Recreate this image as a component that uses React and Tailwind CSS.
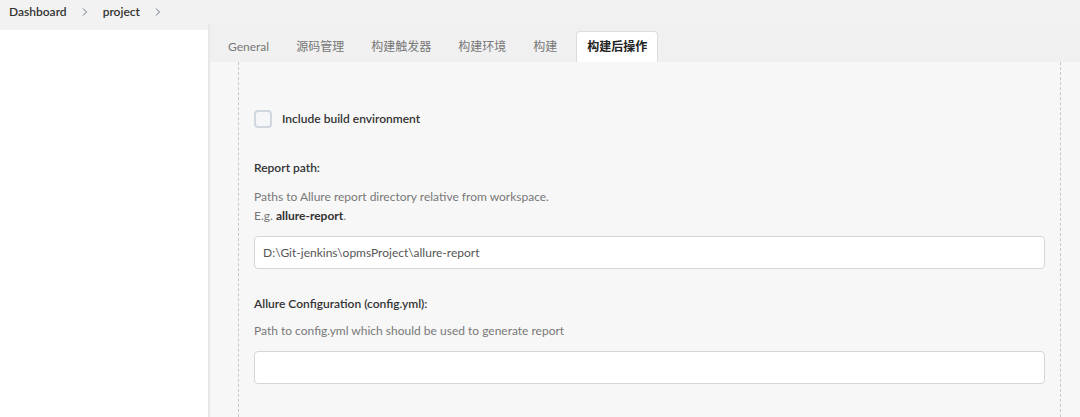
const font = { fontFamily: 'Lato, "Noto Sans CJK SC", sans-serif' };

function Chevron() {
  return (
    <svg width="8" height="10" viewBox="0 0 8 10" className="text-gray-500">
      <path d="M2 1.5 L5.5 5 L2 8.5" fill="none" stroke="currentColor" strokeWidth="1" />
    </svg>
  );
}

const tabs = ["General", "源码管理", "构建触发器", "构建环境", "构建"];

export default function App() {
  return (
    <div className="w-[1080px] h-[417px] overflow-hidden bg-[#f2f2f2] text-[#333]" style={font}>
      <div className="h-[24px] flex items-center gap-[14px] pl-[9px] text-[12px] font-semibold text-[#333]">
        <span>Dashboard</span>
        <Chevron />
        <span>project</span>
        <Chevron />
      </div>
      <div className="flex h-[393px]">
        <div className="w-[208px] bg-white shrink-0 mt-[6px]" />
        <div className="w-[2px] bg-[#e8e8e8] shrink-0" />
        <div className="flex-1 flex flex-col">
          <div className="h-[38px] flex items-end pl-[18px] bg-[#f0f0f0]">
            {tabs.map((t) => (
              <div key={t} className="h-[30px] flex items-center mr-[27px] text-[12px] text-[#777]">
                {t}
              </div>
            ))}
            <div className="h-[31px] -ml-[8px] px-[10px] flex items-center bg-white border border-b-0 border-[#dcdcdc] rounded-t-[4px] text-[12px] font-bold text-[#222]">
              构建后操作
            </div>
          </div>
          <div className="flex-1 bg-[#f7f7f7] pl-[28px] pr-[19px]">
            <div className="h-full border-l border-r border-dashed border-[#c8c8c8] pl-[15px] pr-[15px]">
              <div className="pt-[48px] flex items-center gap-[10px]">
                <div className="w-[18px] h-[18px] rounded-[4px] border-2 border-[#cfd6de] bg-[#f4f6f8]" />
                <span className="text-[12px] font-semibold text-[#333]">Include build environment</span>
              </div>
              <div className="mt-[31px] text-[12px] font-semibold text-[#333]">Report path:</div>
              <div className="mt-[10px] text-[12px] text-[#777] leading-[19px]">
                Paths to Allure report directory relative from workspace.
                <br />
                E.g. <b className="text-[#333]">allure-report</b>.
              </div>
              <div className="mt-[11px] h-[33px] bg-white border border-[#d6d6d6] rounded-[4px] flex items-center px-[8px] text-[12px] text-[#555]">
                D:\Git-jenkins\opmsProject\allure-report
              </div>
              <div className="mt-[26px] text-[12px] font-semibold text-[#333]">Allure Configuration (config.yml):</div>
              <div className="mt-[9px] text-[12px] text-[#777]">
                Path to config.yml which should be used to generate report
              </div>
              <div className="mt-[11px] h-[33px] bg-white border border-[#d6d6d6] rounded-[4px]" />
            </div>
          </div>
        </div>
      </div>
    </div>
  );
}
